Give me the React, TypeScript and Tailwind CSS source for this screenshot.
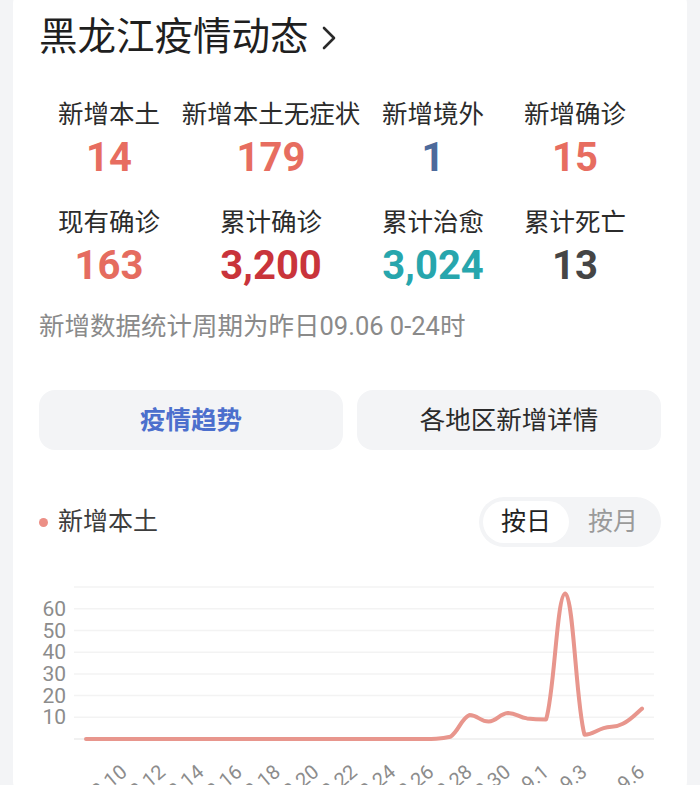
import React from "react";

const FONT = "font-['Roboto','Noto_Sans_CJK_SC',sans-serif]";

const STATS = [
  { label: "新增本土", value: "14", color: "text-[#e76d60]" },
  { label: "新增本土无症状", value: "179", color: "text-[#e76d60]" },
  { label: "新增境外", value: "1", color: "text-[#4d6a9b]" },
  { label: "新增确诊", value: "15", color: "text-[#e76d60]" },
  { label: "现有确诊", value: "163", color: "text-[#e56c5f]" },
  { label: "累计确诊", value: "3,200", color: "text-[#c9343b]" },
  { label: "累计治愈", value: "3,024", color: "text-[#27a6ad]" },
  { label: "累计死亡", value: "13", color: "text-[#454545]" },
];

// 8.8 -> 9.6, new local cases per day
const VALUES = [
  ...Array(19).fill(0),
  1, 11, 8, 12, 9.5, 9, 67, 2, 5, 7, 14,
];

const X0 = 87;
const STEP = 19.172;
const Y0 = 739;
const UNIT = 2.17;

const DATES: string[] = (() => {
  const out: string[] = [];
  for (let d = 8; d <= 31; d++) out.push(`8.${d}`);
  for (let d = 1; d <= 6; d++) out.push(`9.${d}`);
  return out;
})();

const SHOWN = ["8.10", "8.12", "8.14", "8.16", "8.18", "8.20", "8.22", "8.24", "8.26", "8.28", "8.30", "9.1", "9.3", "9.6"];

function buildPath() {
  const pts = VALUES.map((v, i) => [X0 + i * STEP, Y0 - v * UNIT]);
  const s = 0.22;
  let d = `M${pts[0][0]},${pts[0][1]}`;
  for (let i = 0; i < pts.length - 1; i++) {
    const p0 = pts[Math.max(i - 1, 0)];
    const p1 = pts[i];
    const p2 = pts[i + 1];
    const p3 = pts[Math.min(i + 2, pts.length - 1)];
    const lo = Math.min(p1[1], p2[1]);
    const hi = Math.max(p1[1], p2[1]);
    const clamp = (y: number) => Math.min(hi, Math.max(lo, y));
    const c1x = p1[0] + (p2[0] - p0[0]) * s;
    const c1y = clamp(p1[1] + (p2[1] - p0[1]) * s);
    const c2x = p2[0] - (p3[0] - p1[0]) * s;
    const c2y = clamp(p2[1] - (p3[1] - p1[1]) * s);
    d += ` C${c1x.toFixed(1)},${c1y.toFixed(1)} ${c2x.toFixed(1)},${c2y.toFixed(1)} ${p2[0].toFixed(1)},${p2[1].toFixed(1)}`;
  }
  return d;
}

function TrendChart() {
  const grid = [0, 1, 2, 3, 4, 5, 6, 7].map((k) => Y0 - k * 10 * UNIT);
  return (
    <svg width={674} height={250} viewBox="14 547 674 250" className="block">
      {grid.map((y, k) => (
        <line key={k} x1={75} x2={655} y1={y} y2={y} stroke={k === 0 ? "#ececec" : "#f3f3f3"} strokeWidth={1.5} />
      ))}
      {[10, 20, 30, 40, 50, 60].map((v) => (
        <text
          key={v}
          x={67}
          y={Y0 - v * UNIT + 7}
          textAnchor="end"
          fontFamily="Roboto, sans-serif"
          fontSize={21}
          fill="#8c8c8c"
        >
          {v}
        </text>
      ))}
      <path d={buildPath()} fill="none" stroke="#e8968d" strokeWidth={4} strokeLinecap="round" strokeLinejoin="round" />
      {SHOWN.map((label) => {
        const i = DATES.indexOf(label);
        const x = X0 + i * STEP + 4;
        const y = 774;
        return (
          <text
            key={label}
            x={x}
            y={y}
            textAnchor="end"
            transform={`rotate(-40 ${x} ${y})`}
            fontFamily="Roboto, sans-serif"
            fontSize={20}
            fill="#8c8c8c"
          >
            {label}
          </text>
        );
      })}
    </svg>
  );
}

export default function App() {
  return (
    <div className={`min-h-[785px] bg-[#f3f4f6] px-[13px] ${FONT}`}>
      <div className="mt-[-12px] overflow-hidden rounded-[16px] bg-white pt-[27px]">
        <div className="px-[26px]">
          <div className="flex items-center gap-[12px]">
            <h1 className="text-[38.5px] leading-[44px] text-[#1f1f1f]">黑龙江疫情动态</h1>
            <svg width="16" height="28" viewBox="0 0 16 28" className="mt-[2px]">
              <polyline points="3,4 13,14 3,24" fill="none" stroke="#2a2a2a" strokeWidth="2.6" strokeLinecap="round" strokeLinejoin="round" />
            </svg>
          </div>

          <div className="mt-[38px] grid grid-cols-[140px_184px_140px_144px] gap-y-[27px]">
            {STATS.map((s) => (
              <div key={s.label} className="flex flex-col items-center">
                <span className="text-[25.5px] leading-[34px] text-[#2b2b2b]">{s.label}</span>
                <span className={`mt-[7px] text-[40px] font-bold leading-[40px] ${s.color}`}>{s.value}</span>
              </div>
            ))}
          </div>

          <p className="mt-[24px] text-[25.5px] leading-[32px] text-[#8a8a8a]">新增数据统计周期为昨日09.06 0-24时</p>

          <div className="mt-[48px] grid grid-cols-2 gap-[14px]">
            <button className="h-[60px] rounded-[16px] bg-[#f3f4f6] text-[25.5px] font-bold text-[#4c6fcd]">疫情趋势</button>
            <button className="h-[60px] rounded-[16px] bg-[#f3f4f6] text-[25.5px] text-[#2b2b2b]">各地区新增详情</button>
          </div>

          <div className="mt-[47px] flex items-center justify-between">
            <div className="flex items-center gap-[10px]">
              <span className="h-[9px] w-[9px] rounded-full bg-[#ec8f86]" />
              <span className="text-[25px] leading-[34px] text-[#3d3d3d]">新增本土</span>
            </div>
            <div className="flex h-[50px] w-[182px] items-center rounded-full bg-[#f3f4f6] p-[4px]">
              <span className="flex h-[42px] w-[86px] items-center justify-center rounded-full bg-white text-[25px] text-[#222]">按日</span>
              <span className="flex h-[42px] flex-1 items-center justify-center text-[25px] text-[#9a9a9a]">按月</span>
            </div>
          </div>
        </div>

        <TrendChart />
      </div>
    </div>
  );
}
